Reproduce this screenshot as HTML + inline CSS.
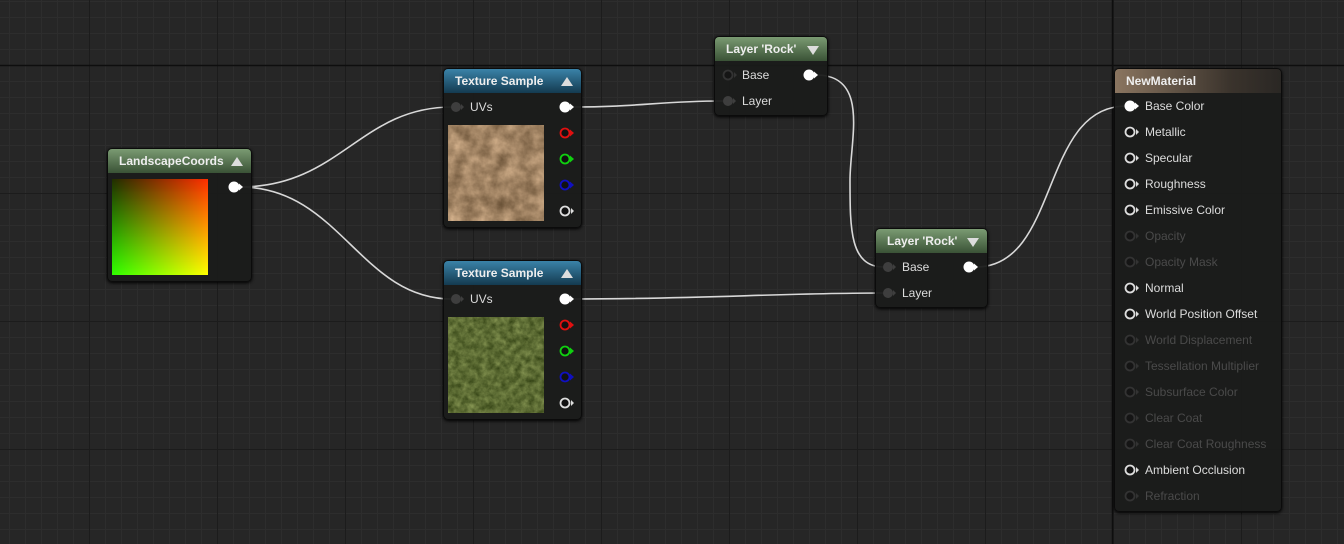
<!DOCTYPE html>
<html><head><style>
*{margin:0;padding:0;box-sizing:border-box}
body{width:1344px;height:544px;overflow:hidden;background:#262626;font-family:"Liberation Sans",sans-serif;position:relative}
.node{position:absolute;background:rgba(26,27,26,0.95);border:1px solid #0b0b0b;border-radius:5px;box-shadow:0 1px 3px #000}
.hd{height:24px;border-radius:4px 4px 0 0;color:#eee;font-weight:bold;font-size:12px;line-height:24px;padding-left:11px;position:relative}
.g{background:linear-gradient(to bottom,#7a9a72,#3a5236)}
.b{background:linear-gradient(to bottom,#3a82a8,#143a50)}
.m{background:linear-gradient(to right,#8a7560,#3a332c 70%,#2a2724)}
.tri{position:absolute;right:8px;top:8px;width:0;height:0;border-left:6px solid transparent;border-right:6px solid transparent}
.up{border-bottom:9px solid #ddd}
.dn{border-top:9px solid #ddd;top:9px}
.t{position:absolute;color:#dcdcdc;font-size:12px}
.dim{color:#4a4a4a}
</style></head><body>
<svg width="1344" height="544" style="position:absolute;left:0;top:0">
<defs>
<pattern id="mn" x="9" y="1" width="16" height="16" patternUnits="userSpaceOnUse"><path d="M0 0.5H16M0.5 0V16" stroke="#2d2d2d" stroke-width="1" fill="none"/></pattern>
<pattern id="mj" x="89" y="65" width="128" height="128" patternUnits="userSpaceOnUse"><path d="M0 0.5H128M0.5 0V128" stroke="#1c1c1c" stroke-width="1" fill="none"/></pattern>
<filter id="n1" color-interpolation-filters="sRGB"><feTurbulence type="fractalNoise" baseFrequency="0.07" numOctaves="4" seed="3"/><feColorMatrix type="matrix" values="0.5 0 0 0 0.37  0.45 0 0 0 0.28  0.4 0 0 0 0.18  0 0 0 0 1"/></filter>
<filter id="n2" color-interpolation-filters="sRGB"><feTurbulence type="fractalNoise" baseFrequency="0.15" numOctaves="4" seed="7"/><feColorMatrix type="matrix" values="0.4 0 0 0 0.16  0.4 0 0 0 0.22  0.3 0 0 0 0.05  0 0 0 0 1"/></filter>
</defs>
<rect width="1344" height="544" fill="url(#mn)"/>
<rect width="1344" height="544" fill="url(#mj)"/>
<path d="M0 65.5H1344M1112.5 0V544" stroke="#0e0e0e" stroke-width="1.5"/>
<g fill="none" stroke="#d8d8d8" stroke-width="1.6">
<path d="M240 187C340 187 360 107 452 107"/>
<path d="M240 187C340 187 360 299 452 299"/>
<path d="M572 107C640 107 660 101 723 101"/>
<path d="M816 75C870 75 850 140 850 180C850 230 850 267 884 267"/>
<path d="M572 299C700 299 780 293 884 293"/>
<path d="M976 267C1060 267 1040 106 1126 106"/>
</g>
</svg>

<div class="node" style="left:107px;top:148px;width:145px;height:134px">
<div class="hd g">LandscapeCoords<div class="tri up"></div></div>
<div style="position:absolute;left:4px;top:30px;width:96px;height:96px;background:linear-gradient(to right,#102000,#ff2000);"></div>
<div style="position:absolute;left:4px;top:30px;width:96px;height:96px;background:linear-gradient(to bottom,#101000,#20ff00);mix-blend-mode:screen"></div>
</div>

<div class="node" style="left:443px;top:68px;width:139px;height:160px">
<div class="hd b">Texture Sample<div class="tri up"></div></div>
<div class="t" style="left:26px;top:31px">UVs</div>
<svg width="96" height="96" style="position:absolute;left:4px;top:56px"><rect width="96" height="96" filter="url(#n1)"/></svg>
</div>
<div class="node" style="left:443px;top:260px;width:139px;height:160px">
<div class="hd b">Texture Sample<div class="tri up"></div></div>
<div class="t" style="left:26px;top:31px">UVs</div>
<svg width="96" height="96" style="position:absolute;left:4px;top:56px"><rect width="96" height="96" filter="url(#n2)"/></svg>
</div>

<div class="node" style="left:714px;top:36px;width:114px;height:80px">
<div class="hd g">Layer 'Rock'<div class="tri dn"></div></div>
<div class="t" style="left:27px;top:31px">Base</div>
<div class="t" style="left:27px;top:57px">Layer</div>
</div>
<div class="node" style="left:875px;top:228px;width:113px;height:80px">
<div class="hd g">Layer 'Rock'<div class="tri dn"></div></div>
<div class="t" style="left:26px;top:31px">Base</div>
<div class="t" style="left:26px;top:57px">Layer</div>
</div>

<div class="node" style="left:1114px;top:68px;width:168px;height:444px">
<div class="hd m">NewMaterial</div>
<div class="t" style="left:30px;top:30px">Base Color</div>
<div class="t" style="left:30px;top:56px">Metallic</div>
<div class="t" style="left:30px;top:82px">Specular</div>
<div class="t" style="left:30px;top:108px">Roughness</div>
<div class="t" style="left:30px;top:134px">Emissive Color</div>
<div class="t dim" style="left:30px;top:160px">Opacity</div>
<div class="t dim" style="left:30px;top:186px">Opacity Mask</div>
<div class="t" style="left:30px;top:212px">Normal</div>
<div class="t" style="left:30px;top:238px">World Position Offset</div>
<div class="t dim" style="left:30px;top:264px">World Displacement</div>
<div class="t dim" style="left:30px;top:290px">Tessellation Multiplier</div>
<div class="t dim" style="left:30px;top:316px">Subsurface Color</div>
<div class="t dim" style="left:30px;top:342px">Clear Coat</div>
<div class="t dim" style="left:30px;top:368px">Clear Coat Roughness</div>
<div class="t" style="left:30px;top:394px">Ambient Occlusion</div>
<div class="t dim" style="left:30px;top:420px">Refraction</div>
</div>

<svg width="1344" height="544" style="position:absolute;left:0;top:0">
<defs>
<g id="pf"><circle r="5.5" fill="#fff"/><path d="M5 -3.5L9 0L5 3.5Z" fill="#fff"/></g>
<g id="pr"><circle r="4.5" fill="#111" stroke="#ddd" stroke-width="1.8"/><path d="M6 -3L9 0L6 3Z" fill="#ddd"/></g>
<g id="pd"><circle r="4.5" fill="#151515" stroke="#333" stroke-width="1.8"/><path d="M6 -3L9 0L6 3Z" fill="#333"/></g>
<g id="pg"><circle r="5" fill="#3e3e3e"/><path d="M5 -3L8 0L5 3Z" fill="#3e3e3e"/></g>
<g id="cr"><circle r="4.5" fill="#111" stroke="#e01010" stroke-width="1.8"/><path d="M5 -3.5L9 0L5 3.5Z" fill="#e01010"/></g>
<g id="cg"><circle r="4.5" fill="#111" stroke="#10d010" stroke-width="1.8"/><path d="M5 -3.5L9 0L5 3.5Z" fill="#10d010"/></g>
<g id="cb"><circle r="4.5" fill="#111" stroke="#1010c0" stroke-width="1.8"/><path d="M5 -3.5L9 0L5 3.5Z" fill="#1010c0"/></g>
</defs>
<use href="#pf" x="234" y="187"/>
<use href="#pg" x="456" y="107"/><use href="#pf" x="565" y="107"/>
<use href="#cr" x="565" y="133"/><use href="#cg" x="565" y="159"/><use href="#cb" x="565" y="185"/><use href="#pr" x="565" y="211"/>
<use href="#pg" x="456" y="299"/><use href="#pf" x="565" y="299"/>
<use href="#cr" x="565" y="325"/><use href="#cg" x="565" y="351"/><use href="#cb" x="565" y="377"/><use href="#pr" x="565" y="403"/>
<use href="#pd" x="728" y="75"/><use href="#pg" x="728" y="101"/><use href="#pf" x="809" y="75"/>
<use href="#pg" x="888" y="267"/><use href="#pg" x="888" y="293"/><use href="#pf" x="969" y="267"/>
<use href="#pf" x="1130" y="106"/>
<use href="#pr" x="1130" y="132"/><use href="#pr" x="1130" y="158"/><use href="#pr" x="1130" y="184"/><use href="#pr" x="1130" y="210"/>
<use href="#pd" x="1130" y="236"/><use href="#pd" x="1130" y="262"/>
<use href="#pr" x="1130" y="288"/><use href="#pr" x="1130" y="314"/>
<use href="#pd" x="1130" y="340"/><use href="#pd" x="1130" y="366"/><use href="#pd" x="1130" y="392"/><use href="#pd" x="1130" y="418"/><use href="#pd" x="1130" y="444"/>
<use href="#pr" x="1130" y="470"/><use href="#pd" x="1130" y="496"/>
</svg>
</body></html>
